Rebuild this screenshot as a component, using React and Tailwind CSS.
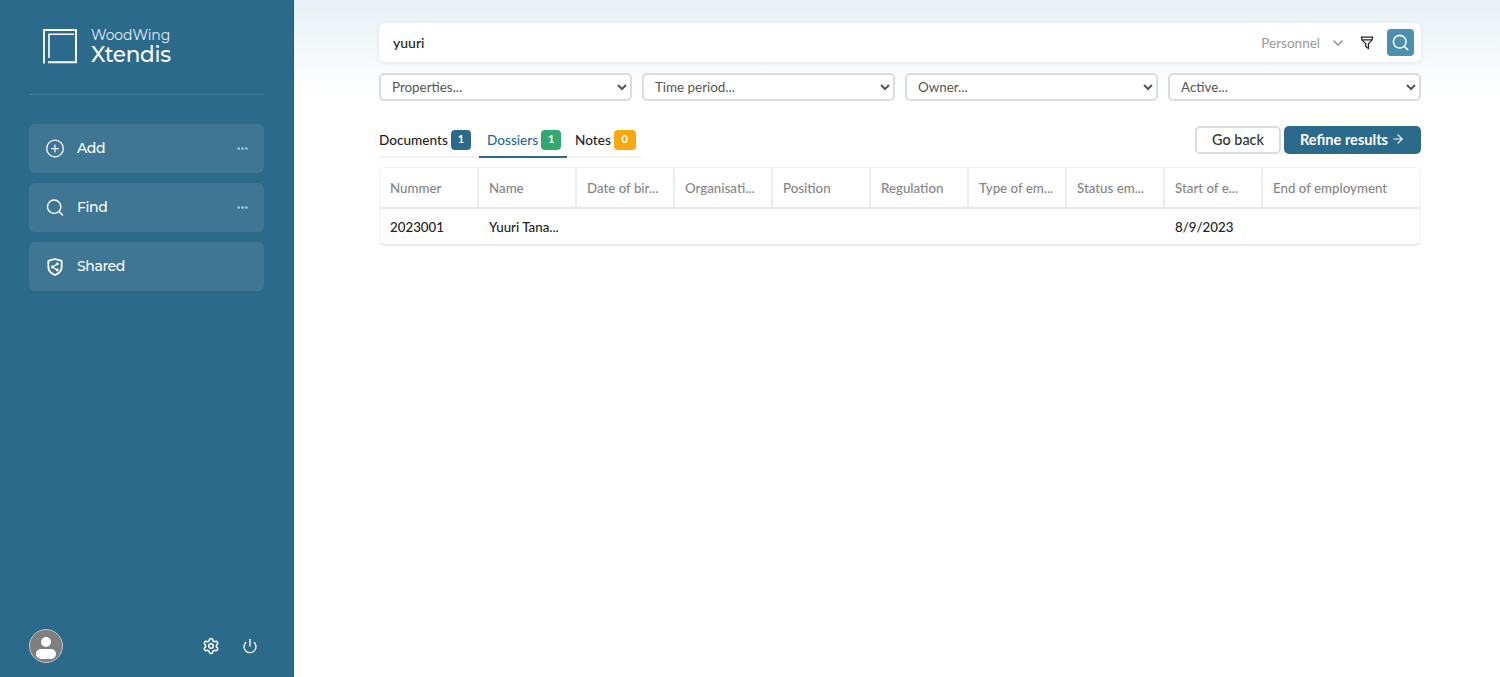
import React from "react";
import { CirclePlus, Search, Settings, Power, Ellipsis, ChevronDown, ArrowRight } from "lucide-react";

const Logo = () => (
  <svg width="36" height="36" viewBox="0 0 36 36" fill="none" stroke="white" className="shrink-0">
    <path d="M35 2H2V35.5" strokeWidth="1.8" />
    <path d="M34 2.5V34.2H6" strokeWidth="2" />
    <path d="M32 6.2H7V30" strokeWidth="1.6" />
  </svg>
);

const Funnel = () => (
  <svg width="14" height="15" viewBox="0 0 16 16" fill="none" stroke="#222" strokeWidth="1.4" strokeLinejoin="round" className="ml-[14px]">
    <path d="M1.6 1.8H14.4L13.8 5 9.6 9.6V15L6.6 12.6V9.6L2.2 5Z" />
    <path d="M2.4 5H13.6" />
  </svg>
);

const ShieldShare = () => (
  <svg width="20" height="20" viewBox="0 0 18 18" fill="none" stroke="white" strokeWidth="1.6">
    <path d="M9 1.8 15 3.4V9c0 3.4-2.5 5.9-6 7.2C5.5 14.9 3 12.4 3 9V3.4Z" strokeLinejoin="round" />
    <circle cx="6.6" cy="9" r="1.3" fill="white" stroke="none" />
    <circle cx="11" cy="6.3" r="1.3" fill="white" stroke="none" />
    <circle cx="11" cy="11.7" r="1.3" fill="white" stroke="none" />
    <path d="M11 6.3 6.6 9 11 11.7" strokeWidth="1.1" />
  </svg>
);

const NavItem = ({ icon, label, more }) => (
  <div className="flex h-[49px] items-center rounded-md bg-[#3e7694] pl-[16px] pr-[15px] text-white">
    <span className="flex w-[20px] justify-center">{icon}</span>
    <span className="ml-[12px] flex-1 pb-[1px] font-['Montserrat','Inter',sans-serif] text-[14px] font-medium tracking-[-0.4px]">{label}</span>
    {more && <Ellipsis size={13} strokeWidth={3} className="text-[#b9cfdb]" />}
  </div>
);

const FilterSelect = ({ label }) => (
  <select
    defaultValue={label}
    className="h-[28px] min-w-0 flex-1 rounded-[5px] border-2 border-[#dcdcdc] bg-white pl-[7px] text-[13.4px] text-[#555]"
  >
    <option>{label}</option>
  </select>
);

const Tab = ({ label, count, color, active, width }) => (
  <div className={`flex h-[32px] items-center gap-[3px] border-b-2 pb-[3px] ${width} ${active ? "border-[#2a6a8c] pl-2 text-[#2a6a8c]" : "border-[#f1f1f1] text-[#1f1f1f]"}`}>
    <span className="pt-[2px] text-[13.6px] font-medium">{label}</span>
    <span className={`flex h-5 min-w-[20px] items-center justify-center rounded-[4px] px-[6px] text-[11px] font-bold text-white ${color}`}>{count}</span>
  </div>
);

const columns = ["Nummer", "Name", "Date of bir...", "Organisati...", "Position", "Regulation", "Type of em...", "Status em...", "Start of e...", "End of employment"];
const row = ["2023001", "Yuuri Tana...", "", "", "", "", "", "", "8/9/2023", ""];

export default function App() {
  return (
    <div className="flex h-[677px] w-[1500px] overflow-hidden bg-white font-['Lato','Noto_Sans',sans-serif]">
      <aside className="flex w-[294px] shrink-0 flex-col border-r border-[#23597a] bg-[#2b6a8b] px-[29px]">
        <div className="flex h-[95px] items-start gap-[13px] border-b border-[#447d9b] pl-[13px] pt-[28px]">
          <Logo />
          <div className="font-['Montserrat','Inter',sans-serif] text-white">
            <div className="mt-[-1px] text-[14px] leading-[16px] tracking-[-0.1px] text-[#e4eef3]">WoodWing</div>
            <div className="text-[21.5px] font-medium leading-[22px] tracking-[-0.3px]">Xtendis</div>
          </div>
        </div>
        <nav className="mt-[29px] flex flex-col gap-[10px]">
          <NavItem icon={<CirclePlus size={21} strokeWidth={1.5} />} label="Add" more />
          <NavItem icon={<Search size={21} strokeWidth={1.7} />} label="Find" more />
          <NavItem icon={<ShieldShare />} label="Shared" />
        </nav>
        <div className="mb-[14px] mt-auto flex items-center">
          <div className="relative h-[34px] w-[34px] overflow-hidden rounded-full border border-[#c4c4c4] bg-[#7f7f7f]">
            <div className="absolute left-[11px] top-[7px] h-[10px] w-[10px] rounded-full bg-white" />
            <div className="absolute left-[6px] top-[19px] h-[10px] w-[20px] rounded-[6px] bg-white" />
          </div>
          <Settings size={18} strokeWidth={2} className="ml-[139px] text-white" />
          <Power size={16} strokeWidth={2} className="ml-[22px] text-white" />
        </div>
      </aside>

      <main className="flex-1 bg-[linear-gradient(to_bottom,#e8f0f4_0,#f4f8fa_50px,#ffffff_100px)] pl-[85px] pr-[79px] pt-[23px]">
        <div className="flex h-[39px] items-center rounded-md bg-white pl-[14px] pr-[7px] shadow-[0_1px_4px_rgba(60,100,130,0.12)]">
          <span className="flex-1 text-[14px] font-medium text-[#222]">yuuri</span>
          <span className="pt-[1px] text-[13.5px] text-[#9a9a9a]">Personnel</span>
          <ChevronDown size={16} strokeWidth={2} className="ml-[10px] text-[#8a8a8a]" />
          <Funnel />
          <span className="ml-[13px] flex h-[27px] w-[27px] items-center justify-center rounded-[4px] bg-[#4d8fae]">
            <Search size={19} strokeWidth={2} className="text-white" />
          </span>
        </div>

        <div className="mt-[11px] flex gap-[10px]">
          <FilterSelect label="Properties..." />
          <FilterSelect label="Time period..." />
          <FilterSelect label="Owner..." />
          <FilterSelect label="Active..." />
        </div>

        <div className="mt-[25px] flex items-start justify-between">
          <div className="flex">
            <Tab label="Documents" count="1" color="bg-[#2b6a8b]" width="w-[100px]" />
            <Tab label="Dossiers" count="1" color="bg-[#2fa96f]" width="w-[88px]" active />
            <div className="flex h-[32px] w-[75px] items-center gap-[3px] border-b-2 border-[#f1f1f1] pb-[3px] pl-2 text-[#1f1f1f]">
              <span className="pt-[2px] text-[13.6px] font-medium">Notes</span>
              <span className="flex h-5 min-w-[22px] items-center justify-center rounded-[4px] bg-[#f7a80f] text-[11px] font-bold text-white">0</span>
            </div>
          </div>
          <div className="flex gap-[3px]">
            <button className="h-[28px] w-[86px] rounded-[5px] border-2 border-[#dcdcdc] bg-white text-[14.4px] font-medium text-[#333]">Go back</button>
            <button className="flex h-[28px] w-[137px] items-center justify-center gap-[3px] rounded-[5px] bg-[#2b6a8b] text-[14.6px] font-bold text-white">
              Refine results <ArrowRight size={14} strokeWidth={2} className="-mt-[2px]" />
            </button>
          </div>
        </div>

        <div className="mt-[9px] overflow-hidden rounded-md border border-b-2 border-[#f1f1f1] border-b-[#e8e8e8]">
          <div className="grid h-[41px] grid-cols-[99px_repeat(8,98px)_1fr] border-b-2 border-[#e8e8e8]">
            {columns.map((c, i) => (
              <div key={c} className={`flex items-center pl-[10px] pt-[3px] text-[13.3px] font-medium text-[#858585] ${i < 9 ? "border-r-2 border-[#ececec]" : ""}`}>{c}</div>
            ))}
          </div>
          <div className="grid h-[35px] grid-cols-[99px_repeat(8,98px)_1fr]">
            {row.map((c, i) => (
              <div key={i} className="flex items-center pl-[10px] pt-[2px] text-[13.3px] font-medium text-[#222]">{c}</div>
            ))}
          </div>
        </div>
      </main>
    </div>
  );
}
